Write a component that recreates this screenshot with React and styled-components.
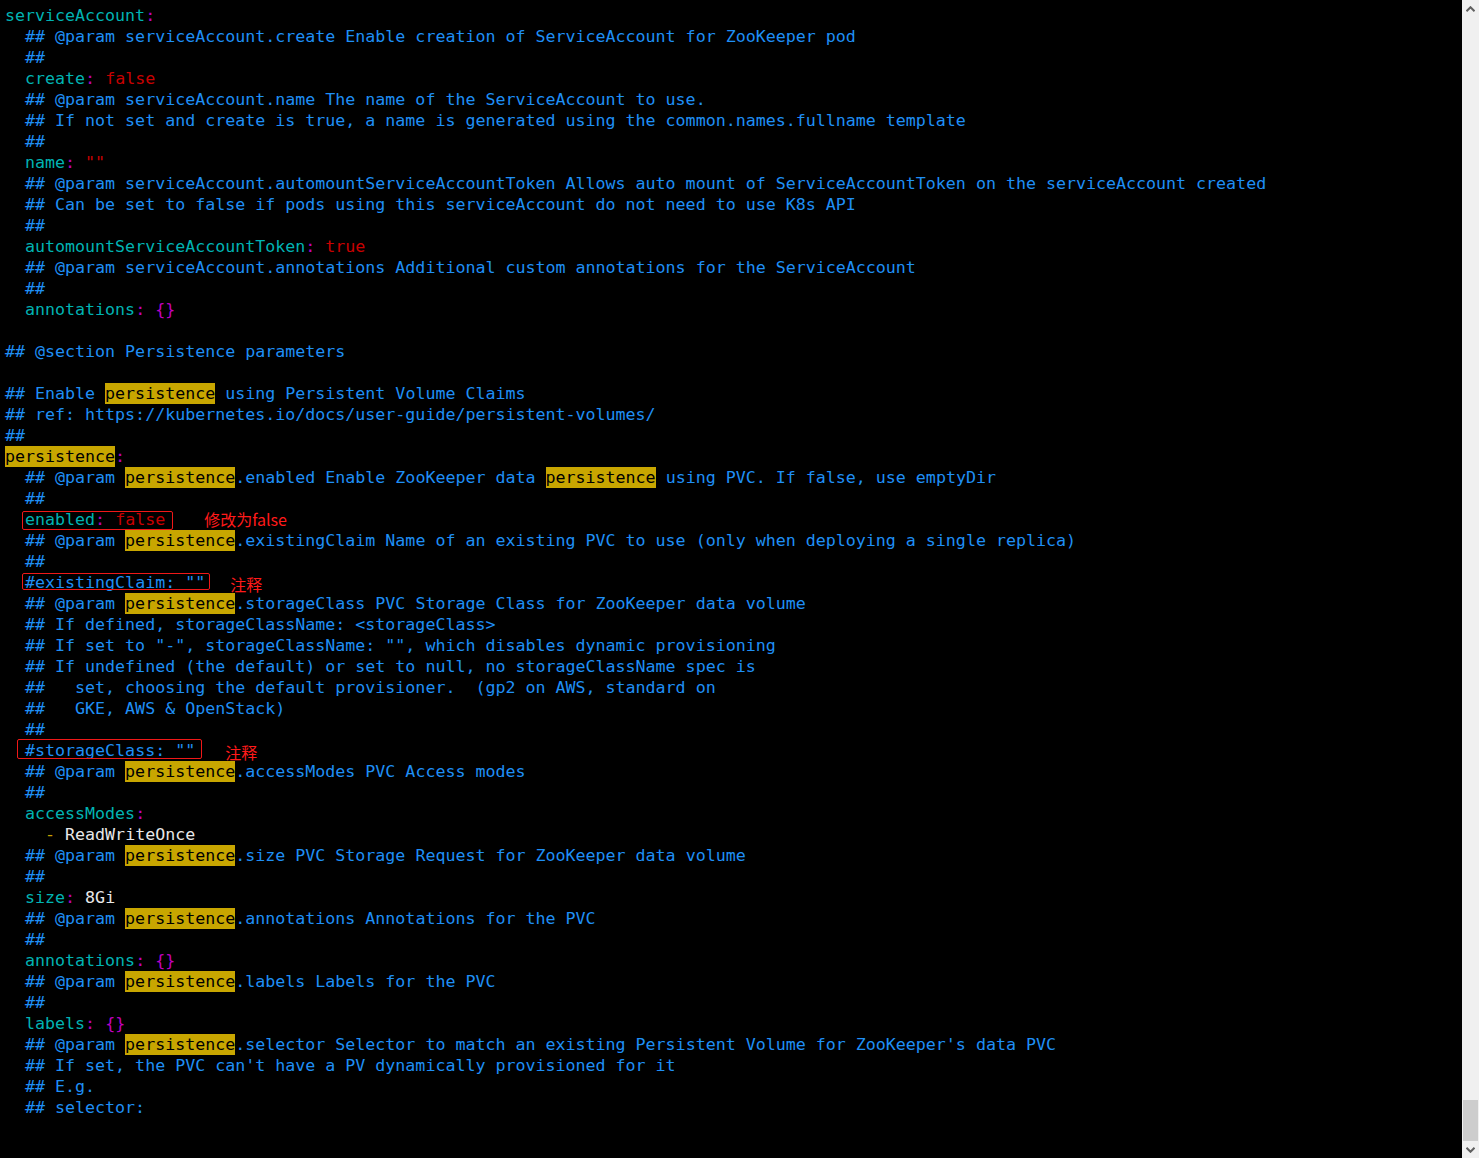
import React from "react";
import styled, { createGlobalStyle } from "styled-components";

const Global = createGlobalStyle`
  html, body { margin: 0; padding: 0; background: #000; }
  body { overflow: hidden; }
`;

const Window = styled.div`
  display: flex;
  width: 100vw;
  height: 100vh;
  background: #000;
`;

const Terminal = styled.div`
  flex: 1;
  overflow: hidden;
  padding: 5px 0 0 5px;
  font-family: "DejaVu Sans Mono", "Liberation Mono", monospace;
  font-size: 16.64px;
  line-height: 21px;
  color: #e8e8e8;
`;

const Line = styled.div`
  height: 21px;
  white-space: pre;
`;

const COLORS = {
  c: "#1f8ff5",
  k: "#00b3b3",
  p: "#c000c0",
  v: "#c80000",
  w: "#e8e8e8",
  d: "#c8a000",
};

const Tok = styled.span`
  color: ${(p) => COLORS[p.$t]};
`;

const Hl = styled.span`
  background: #c8a600;
  color: #000;
  display: inline-block;
  height: 21px;
`;

const Boxed = styled.span`
  position: relative;
  display: inline-block;
  height: 21px;
  &::before {
    content: "";
    position: absolute;
    left: ${(p) => p.$l}px;
    right: ${(p) => p.$r}px;
    top: ${(p) => p.$t}px;
    bottom: ${(p) => p.$b}px;
    border: 1px solid #f01818;
    border-radius: 2px;
  }
`;

const Note = styled.span`
  display: inline-block;
  height: 21px;
  line-height: 21px;
  vertical-align: top;
  margin-left: ${(p) => p.$ml}px;
  transform: translateY(${(p) => p.$dy}px);
  font-family: "Noto Sans CJK SC", "Noto Sans", sans-serif;
  font-size: 16px;
  color: #ff1a1a;
`;

const Scrollbar = styled.div`
  width: 17px;
  flex: none;
  background: #f0f0f0;
  display: flex;
  flex-direction: column;
`;

const ArrowBtn = styled.div`
  height: 17px;
  display: flex;
  align-items: center;
  justify-content: center;
  flex: none;
`;

const Track = styled.div`
  flex: 1;
  display: flex;
  flex-direction: column;
  justify-content: flex-end;
  align-items: center;
`;

const Thumb = styled.div`
  width: 15px;
  height: 41px;
  background: #cdcdcd;
`;

const Chevron = ({ down }) => (
  <svg width="9" height="6" viewBox="0 0 9 6">
    <path
      d={down ? "M0.5 0.8 L4.5 4.8 L8.5 0.8" : "M0.5 5.2 L4.5 1.2 L8.5 5.2"}
      fill="none"
      stroke="#606060"
      strokeWidth="2"
    />
  </svg>
);

// comment: highlight every "persistence"
const Comment = ({ text }) => (
  <Tok $t="c">
    {text.split(/(persistence)/).map((part, i) =>
      part === "persistence" ? <Hl key={i}>{part}</Hl> : part
    )}
  </Tok>
);

const KV = ({ ind = "  ", k, val, vt = "v" }) => (
  <>
    {ind}
    <Tok $t="k">{k}</Tok>
    <Tok $t="p">:</Tok>
    {val !== undefined && (
      <>
        {" "}
        <Tok $t={vt}>{val}</Tok>
      </>
    )}
  </>
);

const lines = [
  <KV ind="" k="serviceAccount" />,
  <Comment text="  ## @param serviceAccount.create Enable creation of ServiceAccount for ZooKeeper pod" />,
  <Comment text="  ##" />,
  <KV k="create" val="false" />,
  <Comment text="  ## @param serviceAccount.name The name of the ServiceAccount to use." />,
  <Comment text="  ## If not set and create is true, a name is generated using the common.names.fullname template" />,
  <Comment text="  ##" />,
  <KV k="name" val={'""'} />,
  <Comment text="  ## @param serviceAccount.automountServiceAccountToken Allows auto mount of ServiceAccountToken on the serviceAccount created" />,
  <Comment text="  ## Can be set to false if pods using this serviceAccount do not need to use K8s API" />,
  <Comment text="  ##" />,
  <KV k="automountServiceAccountToken" val="true" />,
  <Comment text="  ## @param serviceAccount.annotations Additional custom annotations for the ServiceAccount" />,
  <Comment text="  ##" />,
  <KV k="annotations" val="{}" vt="p" />,
  "",
  <Comment text="## @section Persistence parameters" />,
  "",
  <Comment text="## Enable persistence using Persistent Volume Claims" />,
  <Comment text="## ref: https://kubernetes.io/docs/user-guide/persistent-volumes/" />,
  <Comment text="##" />,
  <>
    <Hl>persistence</Hl>
    <Tok $t="p">:</Tok>
  </>,
  <Comment text="  ## @param persistence.enabled Enable ZooKeeper data persistence using PVC. If false, use emptyDir" />,
  <Comment text="  ##" />,
  <>
    {"  "}
    <Boxed $l={-3} $r={-8} $t={2} $b={0}>
      <KV ind="" k="enabled" val="false" />
    </Boxed>
    <Note $ml={39} $dy={0}>修改为false</Note>
  </>,
  <Comment text="  ## @param persistence.existingClaim Name of an existing PVC to use (only when deploying a single replica)" />,
  <Comment text="  ##" />,
  <>
    {"  "}
    <Boxed $l={-3} $r={-5} $t={1} $b={3}>
      <Tok $t="c">#existingClaim: ""</Tok>
    </Boxed>
    <Note $ml={25} $dy={2}>注释</Note>
  </>,
  <Comment text="  ## @param persistence.storageClass PVC Storage Class for ZooKeeper data volume" />,
  <Comment text="  ## If defined, storageClassName: <storageClass>" />,
  <Comment text={'  ## If set to "-", storageClassName: "", which disables dynamic provisioning'} />,
  <Comment text="  ## If undefined (the default) or set to null, no storageClassName spec is" />,
  <Comment text="  ##   set, choosing the default provisioner.  (gp2 on AWS, standard on" />,
  <Comment text="  ##   GKE, AWS & OpenStack)" />,
  <Comment text="  ##" />,
  <>
    {"  "}
    <Boxed $l={-8} $r={-7} $t={-1} $b={2}>
      <Tok $t="c">#storageClass: ""</Tok>
    </Boxed>
    <Note $ml={30} $dy={2}>注释</Note>
  </>,
  <Comment text="  ## @param persistence.accessModes PVC Access modes" />,
  <Comment text="  ##" />,
  <KV k="accessModes" />,
  <>
    {"    "}
    <Tok $t="d">-</Tok>
    {" "}
    <Tok $t="w">ReadWriteOnce</Tok>
  </>,
  <Comment text="  ## @param persistence.size PVC Storage Request for ZooKeeper data volume" />,
  <Comment text="  ##" />,
  <KV k="size" val="8Gi" vt="w" />,
  <Comment text="  ## @param persistence.annotations Annotations for the PVC" />,
  <Comment text="  ##" />,
  <KV k="annotations" val="{}" vt="p" />,
  <Comment text="  ## @param persistence.labels Labels for the PVC" />,
  <Comment text="  ##" />,
  <KV k="labels" val="{}" vt="p" />,
  <Comment text="  ## @param persistence.selector Selector to match an existing Persistent Volume for ZooKeeper's data PVC" />,
  <Comment text="  ## If set, the PVC can't have a PV dynamically provisioned for it" />,
  <Comment text="  ## E.g." />,
  <Comment text="  ## selector:" />,
];

export default function App() {
  return (
    <>
      <Global />
      <Window>
        <Terminal>
          {lines.map((l, i) => (
            <Line key={i}>{l}</Line>
          ))}
        </Terminal>
        <Scrollbar>
          <ArrowBtn>
            <Chevron />
          </ArrowBtn>
          <Track>
            <Thumb />
          </Track>
          <ArrowBtn>
            <Chevron down />
          </ArrowBtn>
        </Scrollbar>
      </Window>
    </>
  );
}
